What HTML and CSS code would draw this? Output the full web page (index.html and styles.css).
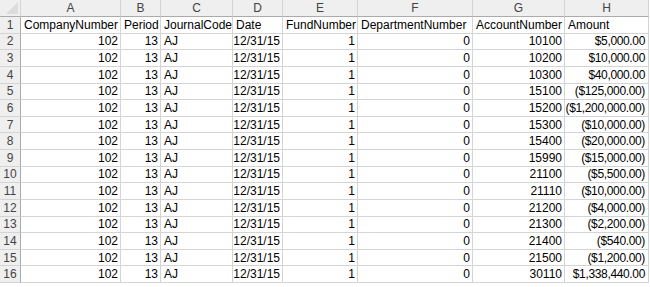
FILE: index.html
```html
<!DOCTYPE html>
<html lang="en">
<head>
<meta charset="utf-8">
<title>Sheet</title>
<link rel="stylesheet" href="styles.css">
</head>
<body>
<div class="sheet">
  <div class="corner"><svg class="tri" width="12" height="12" viewBox="0 0 12 12"><polygon points="12,0 12,12 0,12" fill="#dcdcdc"/></svg></div>
  <div class="ch">A</div><div class="ch">B</div><div class="ch">C</div><div class="ch">D</div><div class="ch">E</div><div class="ch">F</div><div class="ch">G</div><div class="ch">H</div>

  <div class="rh">1</div><div class="c">CompanyNumber</div><div class="c">Period</div><div class="c">JournalCode</div><div class="c">Date</div><div class="c">FundNumber</div><div class="c">DepartmentNumber</div><div class="c">AccountNumber</div><div class="c">Amount</div>

  <div class="rh">2</div><div class="c n">102</div><div class="c n">13</div><div class="c">AJ</div><div class="c n">12/31/15</div><div class="c n">1</div><div class="c n">0</div><div class="c n">10100</div><div class="c m">$5,000.00</div>
  <div class="rh">3</div><div class="c n">102</div><div class="c n">13</div><div class="c">AJ</div><div class="c n">12/31/15</div><div class="c n">1</div><div class="c n">0</div><div class="c n">10200</div><div class="c m">$10,000.00</div>
  <div class="rh">4</div><div class="c n">102</div><div class="c n">13</div><div class="c">AJ</div><div class="c n">12/31/15</div><div class="c n">1</div><div class="c n">0</div><div class="c n">10300</div><div class="c m">$40,000.00</div>
  <div class="rh">5</div><div class="c n">102</div><div class="c n">13</div><div class="c">AJ</div><div class="c n">12/31/15</div><div class="c n">1</div><div class="c n">0</div><div class="c n">15100</div><div class="c m">($125,000.00)</div>
  <div class="rh">6</div><div class="c n">102</div><div class="c n">13</div><div class="c">AJ</div><div class="c n">12/31/15</div><div class="c n">1</div><div class="c n">0</div><div class="c n">15200</div><div class="c m">($1,200,000.00)</div>
  <div class="rh">7</div><div class="c n">102</div><div class="c n">13</div><div class="c">AJ</div><div class="c n">12/31/15</div><div class="c n">1</div><div class="c n">0</div><div class="c n">15300</div><div class="c m">($10,000.00)</div>
  <div class="rh">8</div><div class="c n">102</div><div class="c n">13</div><div class="c">AJ</div><div class="c n">12/31/15</div><div class="c n">1</div><div class="c n">0</div><div class="c n">15400</div><div class="c m">($20,000.00)</div>
  <div class="rh">9</div><div class="c n">102</div><div class="c n">13</div><div class="c">AJ</div><div class="c n">12/31/15</div><div class="c n">1</div><div class="c n">0</div><div class="c n">15990</div><div class="c m">($15,000.00)</div>
  <div class="rh">10</div><div class="c n">102</div><div class="c n">13</div><div class="c">AJ</div><div class="c n">12/31/15</div><div class="c n">1</div><div class="c n">0</div><div class="c n">21100</div><div class="c m">($5,500.00)</div>
  <div class="rh">11</div><div class="c n">102</div><div class="c n">13</div><div class="c">AJ</div><div class="c n">12/31/15</div><div class="c n">1</div><div class="c n">0</div><div class="c n">21110</div><div class="c m">($10,000.00)</div>
  <div class="rh">12</div><div class="c n">102</div><div class="c n">13</div><div class="c">AJ</div><div class="c n">12/31/15</div><div class="c n">1</div><div class="c n">0</div><div class="c n">21200</div><div class="c m">($4,000.00)</div>
  <div class="rh">13</div><div class="c n">102</div><div class="c n">13</div><div class="c">AJ</div><div class="c n">12/31/15</div><div class="c n">1</div><div class="c n">0</div><div class="c n">21300</div><div class="c m">($2,200.00)</div>
  <div class="rh">14</div><div class="c n">102</div><div class="c n">13</div><div class="c">AJ</div><div class="c n">12/31/15</div><div class="c n">1</div><div class="c n">0</div><div class="c n">21400</div><div class="c m">($540.00)</div>
  <div class="rh">15</div><div class="c n">102</div><div class="c n">13</div><div class="c">AJ</div><div class="c n">12/31/15</div><div class="c n">1</div><div class="c n">0</div><div class="c n">21500</div><div class="c m">($1,200.00)</div>
  <div class="rh">16</div><div class="c n">102</div><div class="c n">13</div><div class="c">AJ</div><div class="c n">12/31/15</div><div class="c n">1</div><div class="c n">0</div><div class="c n">30110</div><div class="c m">$1,338,440.00</div>
</div>
</body>
</html>
```
FILE: styles.css
```css
html, body {
  margin: 0;
  padding: 0;
  background: #ffffff;
}

body {
  font-family: "Liberation Sans", Arial, sans-serif;
  font-size: 12px;
  color: #000000;
  overflow: hidden;
}

.sheet {
  display: grid;
  grid-template-columns: 21px 100px 40px 72px 50px 75px 115px 92px 84px;
  grid-template-rows: 17px;
  grid-auto-rows: 16.625px;
  width: 649px;
}

.sheet > div {
  box-sizing: border-box;
  border-right: 1px solid #d4d4d4;
  border-bottom: 1px solid #d4d4d4;
  white-space: nowrap;
  overflow: hidden;
  display: flex;
  align-items: center;
}

.corner {
  background: #efefef;
  position: relative;
  border-bottom-color: #ababab !important;
}

.tri {
  position: absolute;
  right: 2px;
  bottom: 2px;
}

.ch {
  background: #efefef;
  color: #444444;
  justify-content: center;
  border-bottom-color: #ababab !important;
}

.rh {
  background: #efefef;
  color: #444444;
  justify-content: center;
  border-right-color: #ababab !important;
}

.c {
  padding: 0 2px 0 3px;
}

.n {
  justify-content: flex-end;
}

.m {
  justify-content: flex-end;
  padding: 0 3px 0 0;
  letter-spacing: -0.35px;
}
```
